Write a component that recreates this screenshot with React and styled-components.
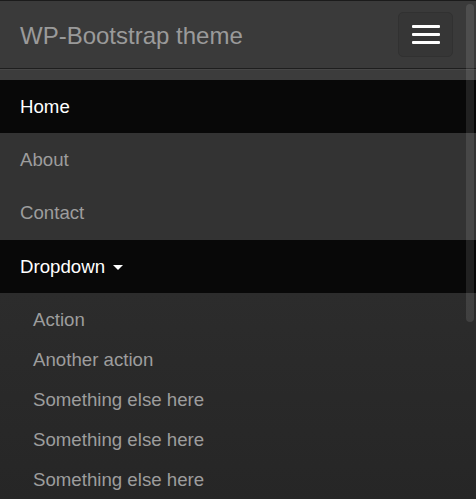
import React from 'react'
import styled, { createGlobalStyle } from 'styled-components'

const GlobalStyle = createGlobalStyle`
    html, body {
        margin: 0;
        padding: 0;
        height: 100%;
        overflow: hidden;
        background: #272727;
        font-family: "Liberation Sans", Arial, sans-serif;
    }
`

const Navbar = styled.nav`
    border-top: 1px solid #1b1b1b;
    background: #3a3a3a;
    min-height: 100vh;
`

const Header = styled.div`
    display: flex;
    align-items: center;
    justify-content: space-between;
    height: 66.7px;
    padding: 0 20px;
`

const Brand = styled.a`
    padding-top: 3px;
    font-size: 24px;
    line-height: 26.67px;
    color: #9a9a9a;
    text-decoration: none;
`

const Toggle = styled.button`
    display: flex;
    flex-direction: column;
    justify-content: center;
    gap: 5.33px;
    width: 55px;
    height: 45px;
    padding: 0 12.5px;
    margin-right: 3px;
    background: #363636;
    border: 1px solid #313131;
    border-radius: 5px;
    cursor: pointer;
`

const Bar = styled.span`
    display: block;
    height: 2.67px;
    border-radius: 1px;
    background: #fff;
`

const Collapse = styled.div`
    border-top: 1px solid #1e1e1e;
    box-shadow: inset 0 1px 0 rgba(255, 255, 255, 0.06);
    padding-top: 11.3px;
    background: #3c3c3c;
`

const NavList = styled.ul`
    list-style: none;
    margin: 0;
    padding: 0;
    background: #333;
`

const NavLink = styled.a`
    display: flex;
    align-items: center;
    height: 53.33px;
    padding: 0 20px;
    font-size: 18.67px;
    color: ${p => (p.$active ? '#fff' : '#9d9d9d')};
    background: ${p => (p.$active ? '#080808' : 'transparent')};
    text-decoration: none;
`

const Caret = styled.span`
    display: inline-block;
    margin-left: 8px;
    margin-top: 2px;
    width: 0;
    height: 0;
    border-top: 5.33px solid #fff;
    border-left: 5.33px solid transparent;
    border-right: 5.33px solid transparent;
`

const Menu = styled.ul`
    list-style: none;
    margin: 0;
    padding: 6.67px 0 0;
    background: linear-gradient(#2c2c2c, #262626);
    min-height: 200px;
`

const MenuLink = styled.a`
    display: flex;
    align-items: center;
    height: 40px;
    padding: 0 20px 0 33px;
    font-size: 18.67px;
    color: #9d9d9d;
    text-decoration: none;
`

// overlay scrollbar thumb drawn over the open menu
const Scrollbar = styled.div`
    position: fixed;
    top: 4px;
    right: 2px;
    width: 8px;
    height: 318px;
    border-radius: 4px;
    background: rgba(255, 255, 255, 0.1);
`

const items = ['Action', 'Another action', 'Something else here', 'Something else here', 'Something else here']

const App = () => {
    return (
        <>
            <GlobalStyle />
            <Navbar>
                <Header>
                    <Brand href="#">WP-Bootstrap theme</Brand>
                    <Toggle aria-label="Toggle navigation">
                        <Bar />
                        <Bar />
                        <Bar />
                    </Toggle>
                </Header>
                <Collapse>
                    <NavList>
                        <li><NavLink href="#" $active>Home</NavLink></li>
                        <li><NavLink href="#">About</NavLink></li>
                        <li><NavLink href="#">Contact</NavLink></li>
                        <li>
                            <NavLink href="#" $active>Dropdown<Caret /></NavLink>
                            <Menu>
                                {items.map((item, i) => (
                                    <li key={i}><MenuLink href="#">{item}</MenuLink></li>
                                ))}
                            </Menu>
                        </li>
                    </NavList>
                </Collapse>
            </Navbar>
            <Scrollbar />
        </>
    )
}

export default App
